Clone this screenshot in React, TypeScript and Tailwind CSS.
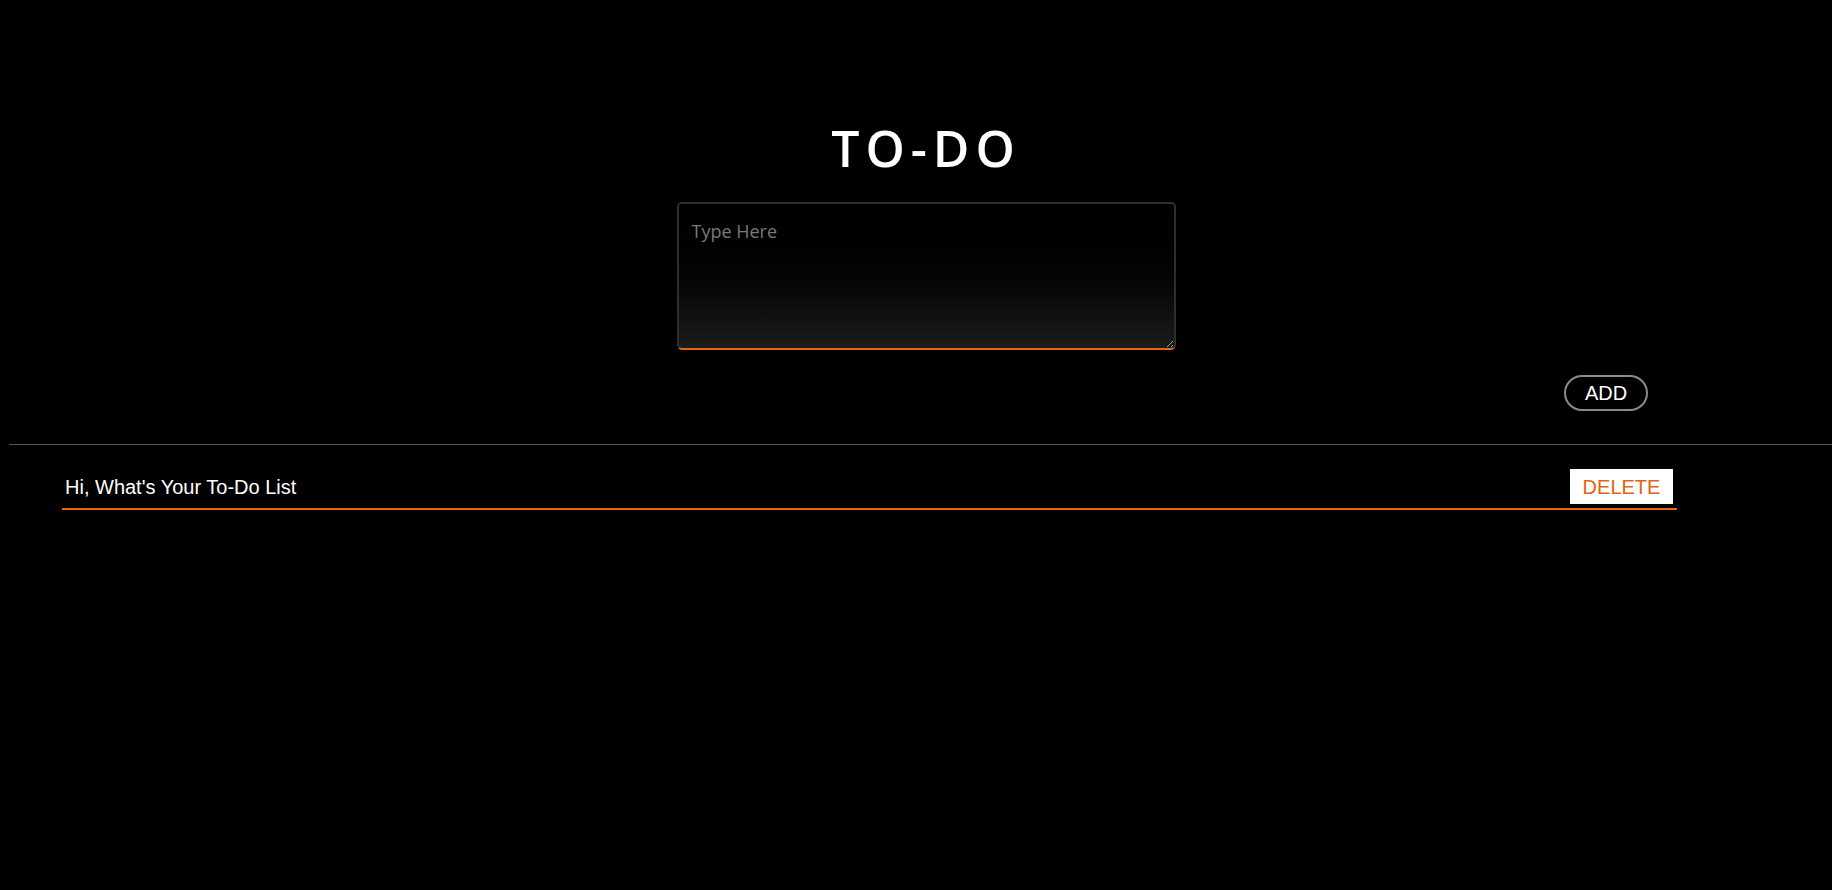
export default function App() {
  return (
    <div className="min-h-[890px] w-full bg-black text-white" style={{ fontFamily: '"Liberation Sans", Arial, sans-serif' }}>
      <div className="flex w-full flex-col items-center pl-[20px] pt-[123px]">
        <h1 className="font-['Open_Sans',sans-serif] text-[50px] font-semibold leading-none tracking-[6px]">
          TO-DO
        </h1>
        <textarea
          placeholder="Type Here"
          className="mt-[29px] h-[148px] w-[499px] rounded-[5px] border-2 border-[#2e2e2e] border-b-[#e4680f] bg-gradient-to-b from-black to-[#1c1c1c] px-[13px] py-[15px] font-['Open_Sans',sans-serif] text-[18px] leading-[24px] text-white outline-none placeholder:text-[#7a7a7a]"
        />
      </div>
      <div className="flex justify-end pr-[184px] pt-[25px]">
        <button className="h-[36px] w-[84px] rounded-full border-2 border-[#8a8a8a] text-[20px] leading-none text-white">
          ADD
        </button>
      </div>
      <div className="ml-[9px] mt-[33px] border-t border-[#555]" />
      <ul className="ml-[62px] mt-[24px] w-[1615px]">
        <li className="flex items-center justify-between border-b-2 border-[#e4680f] pb-[4px] pl-[3px] pr-[4px]">
          <span className="mt-[1px] text-[20px] leading-none">Hi, What's Your To-Do List</span>
          <button className="h-[35px] w-[103px] bg-white text-[20px] leading-none text-[#e2640f]">DELETE</button>
        </li>
      </ul>
    </div>
  );
}
